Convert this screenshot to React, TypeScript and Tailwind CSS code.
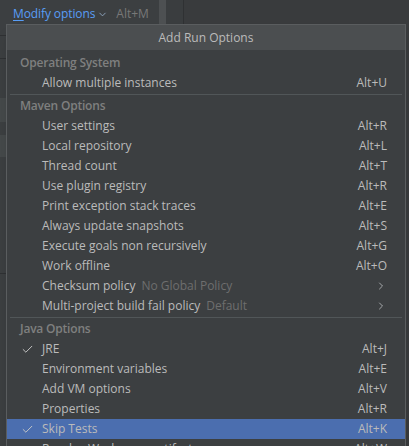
import { Check, ChevronDown, ChevronRight } from "lucide-react";

type Item = {
  label: string;
  hint?: string;
  shortcut?: string;
  submenu?: boolean;
  checked?: boolean;
  selected?: boolean;
};

type Section = { title: string; items: Item[] };

const sections: Section[] = [
  {
    title: "Operating System",
    items: [{ label: "Allow multiple instances", shortcut: "Alt+U" }],
  },
  {
    title: "Maven Options",
    items: [
      { label: "User settings", shortcut: "Alt+R" },
      { label: "Local repository", shortcut: "Alt+L" },
      { label: "Thread count", shortcut: "Alt+T" },
      { label: "Use plugin registry", shortcut: "Alt+R" },
      { label: "Print exception stack traces", shortcut: "Alt+E" },
      { label: "Always update snapshots", shortcut: "Alt+S" },
      { label: "Execute goals non recursively", shortcut: "Alt+G" },
      { label: "Work offline", shortcut: "Alt+O" },
      { label: "Checksum policy", hint: "No Global Policy", submenu: true },
      { label: "Multi-project build fail policy", hint: "Default", submenu: true },
    ],
  },
  {
    title: "Java Options",
    items: [
      { label: "JRE", shortcut: "Alt+J", checked: true },
      { label: "Environment variables", shortcut: "Alt+E" },
      { label: "Add VM options", shortcut: "Alt+V" },
      { label: "Properties", shortcut: "Alt+R" },
      { label: "Skip Tests", shortcut: "Alt+K", checked: true, selected: true },
      { label: "Resolve Workspace artifacts", shortcut: "Alt+W" },
    ],
  },
];

function MenuRow({ item }: { item: Item }) {
  return (
    <div
      className={
        "flex items-center h-5 pl-[14px] pr-[18px] shrink-0 " +
        (item.selected ? "bg-[#4b6eaf]" : "")
      }
    >
      <div className="w-[21px] flex items-center">
        {item.checked && <Check size={13} strokeWidth={1.75} className="text-[#c8c8c8]" />}
      </div>
      <span className="text-[#bbbbbb]">{item.label}</span>
      {item.hint && <span className="ml-[6px] text-[#6e6e6e]">{item.hint}</span>}
      <span className="ml-auto text-[#bbbbbb]">
        {item.submenu ? (
          <ChevronRight size={12} strokeWidth={1.75} className="text-[#b4b6b8]" />
        ) : (
          item.shortcut
        )}
      </span>
    </div>
  );
}

export default function App() {
  return (
    <div
      className="relative w-[409px] h-[446px] overflow-hidden bg-[#3c3f41] text-[12px] flex"
      style={{ fontFamily: '"Open Sans", "Noto Sans", sans-serif' }}
    >
      {/* settings panel behind the popup */}
      <div className="w-[159px] flex flex-col">
        <div className="h-[28px] flex items-center pl-[13px] gap-[2px] whitespace-nowrap">
          <span className="text-[#589df6] tracking-[-0.1px]">
            <span className="underline underline-offset-2">M</span>odify options
          </span>
          <ChevronDown size={11} strokeWidth={2} className="text-[#8fa6c2]" />
          <span className="ml-[6px] text-[#787878]">Alt+M</span>
        </div>
        <div className="mt-[7px] border-t border-[#2f3133]" />
        <div className="mt-[22px] border-t border-[#2f3133]" />
        <div className="mt-[39px] h-[24px] bg-[#45494a]" />
        <div className="mt-[13px] h-[22px] bg-[#45494a]" />
        <div className="mt-[116px] border-t border-[#2f3133]" />
      </div>
      <div className="w-[7px] bg-[#4d5052]" />
      <div className="w-[17px] bg-[#3a3d3f]" />
      <div className="flex-1 border-l border-[#2f3133] bg-[#393b3d]" />

      {/* popup */}
      <div className="absolute left-[6px] top-[24px] w-[400px] h-[440px] border border-[#5a5d5f] bg-[#3c3f41] flex flex-col shadow-lg">
        <div className="h-[25px] shrink-0 bg-[#4b4e50] flex items-center justify-center text-[#bbbbbb]">
          Add Run Options
        </div>
        <div className="flex flex-col pt-[3px] whitespace-nowrap">
          {sections.map((s, i) => (
            <div key={s.title} className="flex flex-col">
              {i > 0 && (
                <div className="h-[3px] flex items-center px-[3px]">
                  <div className="h-px w-full bg-[#515658]" />
                </div>
              )}
              <div className="h-5 flex items-center pl-[13px] font-semibold tracking-[-0.2px] text-[#7f7f7f]">
                {s.title}
              </div>
              {s.items.map((it) => (
                <MenuRow key={it.label} item={it} />
              ))}
            </div>
          ))}
        </div>
      </div>
    </div>
  );
}
